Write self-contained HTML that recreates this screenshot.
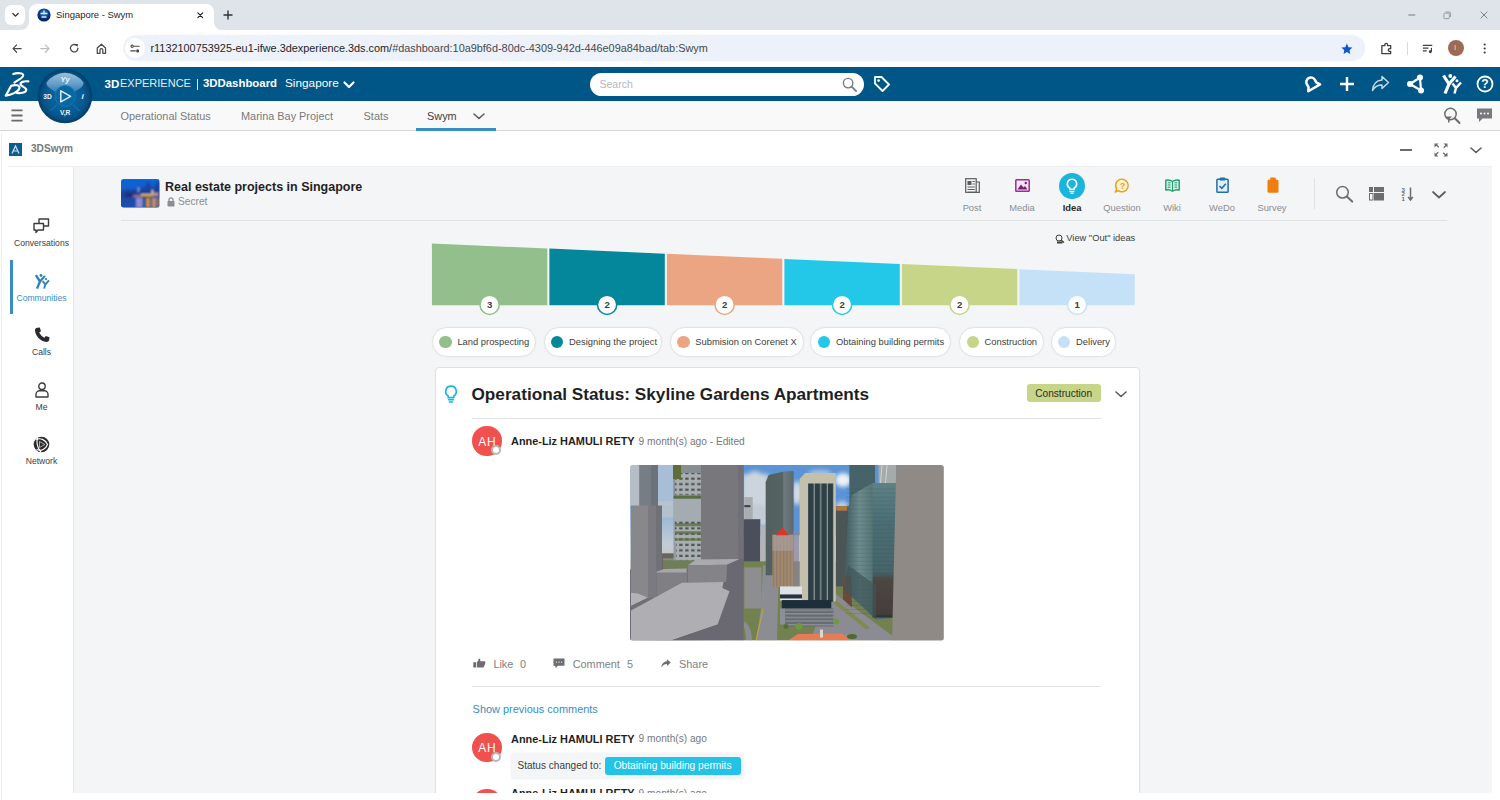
<!DOCTYPE html>
<html><head><meta charset="utf-8"><title>Singapore - Swym</title>
<style>
*{box-sizing:border-box;margin:0;padding:0}
html,body{width:1500px;height:800px;overflow:hidden;background:#fff;font-family:"Liberation Sans",Arial,sans-serif;color:#3d3d3d}
.a{position:absolute}
.t{position:absolute;white-space:nowrap;line-height:1}
svg{position:absolute;overflow:visible}
/* chrome */
#tabbar{left:0;top:0;width:1500px;height:30px;background:#dfe3ea}
#tab{left:29px;top:4px;width:185px;height:26px;background:#fff;border-radius:8px 8px 0 0}
#tabdd{left:5px;top:5px;width:20px;height:20px;background:#fff;border-radius:6px}
#addr{left:0;top:30px;width:1500px;height:37px;background:#fff}
#pill{left:122.500px;top:35px;width:1242px;height:26px;border-radius:13px;background:#edf1fa}
/* 3dx */
#top{left:0;top:66.700px;width:1500px;height:34.600px;background:#005686}
#tabs{left:0;top:101.300px;width:1500px;height:30.200px;background:#f9f9f9;border-bottom:1px solid #d8d8d8}
#whead{left:0;top:132px;width:1500px;height:35px;background:#fff}
#side{left:0;top:165px;width:73px;height:635px;background:#fff}
#main{left:74px;top:167px;width:1417.500px;height:625.500px;background:#f4f5f6}
.sl{left:3px;width:77px;text-align:center;font-size:8.6px;color:#3d3d3d}
.tl{top:203.600px;width:50px;text-align:center;font-size:9.375px;color:#8b8d90}
.pill{top:327px;height:29.700px;border-radius:15px;background:#fff;border:1px solid #e2e4e3;box-shadow:0 0 2px rgba(0,0,0,0.06)}
.pill i{position:absolute;left:6.500px;top:8px;width:12.400px;height:12.400px;border-radius:50%}
.pill span{position:absolute;left:24.500px;top:9.700px;font-size:9.375px;line-height:1;color:#3d3d3d;white-space:nowrap}
.av{width:29.400px;height:29.400px;border-radius:50%;background:#f0514f}
.avt{width:29.400px;text-align:center;font-size:12px;color:#fff;letter-spacing:0.600px;padding-left:0.500px}
.st{width:10px;height:10px;border-radius:50%;background:#fff;border:2px solid #b4b8ba}
.ac{top:658.500px;font-size:10.900px;color:#808285}
</style></head><body>
<div class="a" id="tabbar"></div>
<div class="a" id="tabdd"></div>
<div class="a" id="tab"></div>
<div class="a" id="addr"></div>
<div class="a" id="pill"></div>
<div class="a" id="top"></div>
<div class="a" id="tabs"></div>
<div class="a" id="whead"></div>
<div class="a" id="side"></div>
<div class="a" id="main"></div>

<!-- chrome tab strip -->
<svg style="left:11px;top:12px" width="9" height="6" viewBox="0 0 12 8"><path d="M2.5 2 L6 5.5 L9.5 2" fill="none" stroke="#333" stroke-width="1.8" stroke-linecap="round" stroke-linejoin="round"/></svg>
<svg style="left:21px;top:22px" width="8" height="8" viewBox="0 0 8 8"><path d="M0 8 A8 8 0 0 0 8 0 V8Z" fill="#fff"/></svg>
<svg style="left:214px;top:22px" width="8" height="8" viewBox="0 0 8 8"><path d="M8 8 A8 8 0 0 1 0 0 V8Z" fill="#fff"/></svg>
<svg style="left:37px;top:8px" width="14" height="14" viewBox="0 0 14 14"><defs><radialGradient id="fv" cx="50%" cy="35%" r="65%"><stop offset="0" stop-color="#3f93d6"/><stop offset="0.5" stop-color="#0b3f8c"/><stop offset="1" stop-color="#041c52"/></radialGradient></defs><circle cx="7" cy="7" r="6.6" fill="url(#fv)"/><path d="M3.5 5.5h7M4.5 9h5M7 2.5v3" stroke="#dbeaf8" stroke-width="1.3" fill="none"/></svg>
<div class="t" style="left:56px;top:10.300px;font-size:9.450px;color:#1f1f1f">Singapore - Swym</div>
<svg style="left:196.800px;top:11.800px" width="6.500" height="6.500" viewBox="0 0 8 8"><path d="M1 1L7 7M7 1L1 7" stroke="#222" stroke-width="1.4" stroke-linecap="round"/></svg>
<svg style="left:223px;top:10px" width="10" height="10" viewBox="0 0 10 10"><path d="M5 0.5V9.5M0.5 5H9.5" stroke="#333" stroke-width="1.4"/></svg>
<!-- window controls -->
<svg style="left:1407.800px;top:14px" width="8" height="2" viewBox="0 0 10 2"><path d="M0.5 1H9" stroke="#6f747c" stroke-width="1.200"/></svg>
<svg style="left:1443px;top:10.500px" width="8.500" height="8.500" viewBox="0 0 10 10"><rect x="1" y="2.5" width="6.5" height="6.5" rx="1.5" fill="none" stroke="#8a8f98" stroke-width="1"/><path d="M3 1.2h4.3a1.6 1.6 0 0 1 1.6 1.6V7" fill="none" stroke="#8a8f98" stroke-width="1"/></svg>
<svg style="left:1480px;top:10.800px" width="8" height="8" viewBox="0 0 10 10"><path d="M0.8 0.8L9.2 9.2M9.2 0.8L0.8 9.2" stroke="#777c84" stroke-width="1.200"/></svg>
<!-- nav row -->
<svg style="left:12.300px;top:43.500px" width="10" height="9.200" viewBox="0 0 13 12"><path d="M12 6H1.5M6 1.2L1.3 6L6 10.8" fill="none" stroke="#474747" stroke-width="1.5" stroke-linecap="round" stroke-linejoin="round"/></svg>
<svg style="left:39.500px;top:43.500px" width="10" height="9.200" viewBox="0 0 13 12"><path d="M1 6H11.5M7 1.2L11.7 6L7 10.8" fill="none" stroke="#b9bcc1" stroke-width="1.5" stroke-linecap="round" stroke-linejoin="round"/></svg>
<svg style="left:68.500px;top:43px" width="10.500" height="10.500" viewBox="0 0 13 13"><path d="M11 6.5A4.6 4.6 0 1 1 9.3 2.9" fill="none" stroke="#474747" stroke-width="1.6" stroke-linecap="round"/><path d="M7.3 1.2h3.6v3.6z" fill="#474747"/></svg>
<svg style="left:96.300px;top:42.500px" width="10.800" height="11.600" viewBox="0 0 13 14"><path d="M1.5 6L6.5 1.5L11.5 6V12.5H8.2V8.5a1.7 1.7 0 0 0-3.4 0V12.5H1.5Z" fill="none" stroke="#474747" stroke-width="1.5" stroke-linejoin="round"/></svg>
<div class="a" style="left:125px;top:38px;width:20px;height:20px;border-radius:10px;background:#fff"></div>
<svg style="left:130.200px;top:43.800px" width="10" height="9.200" viewBox="0 0 13 12"><path d="M5.5 3H12M1 9H7" stroke="#474747" stroke-width="1.5" stroke-linecap="round"/><circle cx="2.8" cy="3" r="1.5" fill="none" stroke="#474747" stroke-width="1.4"/><circle cx="10" cy="9" r="2" fill="#474747"/></svg>
<div class="t" id="url" style="left:150.500px;top:42.800px;font-size:10.880px;color:#1f1f1f">r1132100753925-eu1-ifwe.3dexperience.3ds.com/<span style="color:#45494f">#dashboard:10a9bf6d-80dc-4309-942d-446e09a84bad/tab:Swym</span></div>
<svg style="left:1340.600px;top:43.200px" width="11.800" height="11.800" viewBox="0 0 14 14"><path d="M7 0.6L8.9 4.9L13.5 5.4L10.1 8.5L11 13.1L7 10.8L3 13.1L3.9 8.5L0.5 5.4L5.1 4.9Z" fill="#0b57d0"/></svg>
<svg style="left:1379.500px;top:41.800px" width="13" height="13" viewBox="0 0 14 14"><path d="M2 4h3.2V3a1.5 1.5 0 0 1 3 0V4H11.5V7.2h-1a1.5 1.5 0 0 0 0 3h1V12.5H2Z" fill="none" stroke="#3c4043" stroke-width="1.4" stroke-linejoin="round"/></svg>
<div class="a" style="left:1406.500px;top:41.500px;width:1px;height:13.500px;background:#cfd9f5"></div>
<svg style="left:1422px;top:43.500px" width="12" height="9.400" viewBox="0 0 14 11"><path d="M1 1.5H12M1 4.8H7.5M1 8H5.5" stroke="#3c4043" stroke-width="1.4"/><path d="M11 4.5V9" stroke="#3c4043" stroke-width="1.4"/><circle cx="9.7" cy="9" r="1.7" fill="#3c4043"/></svg>
<div class="a" style="left:1448px;top:40px;width:16px;height:16px;border-radius:8px;background:#9c6a55"></div>
<div class="t" style="left:1454px;top:44px;font-size:8px;color:#f3d9cc">I</div>
<svg style="left:1482.600px;top:42.800px" width="3.400" height="11" viewBox="0 0 4 13"><circle cx="2" cy="1.8" r="1.3" fill="#3c4043"/><circle cx="2" cy="6.5" r="1.3" fill="#3c4043"/><circle cx="2" cy="11.2" r="1.3" fill="#3c4043"/></svg>
<!--CHROME-->

<!-- 3DS logo -->
<svg style="left:4px;top:72px" width="27" height="25" viewBox="0 0 27 25"><g fill="none" stroke="#fff" stroke-linecap="round" stroke-linejoin="round"><path d="M9.200 2C13 0.600 19.800 0.800 19.200 3.600C18.600 6.200 13.500 8.200 10.400 10.600" stroke-width="2.100"/><path d="M1.800 23.600L7.200 13.800C11 12.400 16.400 13 15.400 16.400C14.400 19.800 7 23.200 1.800 23.600Z" stroke-width="2.200"/><path d="M24.400 9.400C20 8.800 16 10.200 16.600 12.400C17.200 14.800 23.200 15.400 22.200 18.400C21.400 20.800 16 21.400 12.800 20.800" stroke-width="2.200"/></g></svg>
<!-- compass -->
<svg style="left:35.800px;top:66.600px" width="58" height="58" viewBox="0 0 58 58"><defs><radialGradient id="cg" cx="50%" cy="50%" r="50%"><stop offset="0" stop-color="#0b68a2"/><stop offset="0.750" stop-color="#075b93"/><stop offset="1" stop-color="#044a7c"/></radialGradient><linearGradient id="cq" x1="0" y1="0" x2="0" y2="1"><stop offset="0" stop-color="#a5c8e2"/><stop offset="0.550" stop-color="#6fa5cd"/><stop offset="1" stop-color="#2f7db5"/></linearGradient></defs>
<circle cx="29" cy="29" r="27.300" fill="#03426e"/><circle cx="29" cy="29" r="25" fill="url(#cg)"/>
<path d="M10.500 15.500A22.500 22.500 0 0 1 47.500 15.500C48 19 44 22 37 25.500A9.500 9.500 0 0 0 21 25.500C14 22 10 19 10.500 15.500Z" fill="url(#cq)" opacity="0.920"/>
<circle cx="29.200" cy="29" r="10.400" fill="#0968a3" stroke="#1378b6" stroke-width="0.800"/>
<path d="M24.800 23.800L34.600 29.300L24.800 34.800Z" fill="none" stroke="#e3eef8" stroke-width="1.500" stroke-linejoin="round"/>
<path d="M21 37.500L14.500 44M37 37.500L43.500 44" stroke="#2a7eb4" stroke-width="0.900"/>
<text x="29" y="14.800" font-size="7.500" font-weight="700" font-style="italic" fill="#eef5fb" text-anchor="middle" font-family="Liberation Sans,sans-serif">Yy</text>
<text x="11.500" y="31.700" font-size="6.600" font-weight="700" fill="#eef5fb" text-anchor="middle" font-family="Liberation Sans,sans-serif">3D</text>
<text x="46.500" y="32" font-size="8" font-weight="700" font-style="italic" fill="#eef5fb" text-anchor="middle" font-family="Liberation Sans,sans-serif">i</text>
<text x="29.200" y="48" font-size="6.600" font-weight="700" fill="#eef5fb" text-anchor="middle" font-family="Liberation Sans,sans-serif">V,R</text>
</svg>
<div class="t" style="left:104.500px;top:77.800px;font-size:11.600px;color:#fff;font-weight:700">3D</div>
<div class="t" style="left:120px;top:78.300px;font-size:11px;color:#e3eef6">EXPERIENCE</div>
<div class="a" style="left:196.600px;top:78.500px;width:1px;height:11.500px;background:#dbe8f1"></div>
<div class="t" style="left:203px;top:77.950px;font-size:11.400px;color:#fff;font-weight:700">3DDashboard</div>
<div class="t" id="sg" style="left:285px;top:77.500px;font-size:11.8px;color:#fff">Singapore</div>
<svg style="left:343px;top:81px" width="12" height="8" viewBox="0 0 12 8"><path d="M1.5 1.5L6 6L10.5 1.5" fill="none" stroke="#fff" stroke-width="2.2" stroke-linecap="round" stroke-linejoin="round"/></svg>
<!-- search -->
<div class="a" style="left:590.200px;top:72.500px;width:273.500px;height:23.100px;border-radius:12px;background:#fff"></div>
<div class="t" style="left:599.500px;top:79px;font-size:10.500px;color:#b4b6ba">Search</div>
<svg style="left:842px;top:76.800px" width="15.500" height="15.500" viewBox="0 0 17 17"><circle cx="6.7" cy="6.7" r="5.2" fill="none" stroke="#77797c" stroke-width="1.5"/><path d="M10.6 10.6L15.5 15.5" stroke="#77797c" stroke-width="2" stroke-linecap="round"/></svg>
<svg style="left:873px;top:75px" width="18" height="18" viewBox="0 0 18 18"><path d="M2 2H8.5L16 9.5L9.5 16L2 8.5Z" fill="none" stroke="#fff" stroke-width="1.8" stroke-linejoin="round" transform="rotate(0 9 9)"/><circle cx="5.6" cy="5.6" r="1.3" fill="#fff"/></svg>
<!-- right icons -->
<svg style="left:1302.500px;top:74px" width="18" height="20" viewBox="0 0 18 20"><g transform="rotate(-30 9 10)"><path d="M9 3.200a4.600 4.600 0 0 1 4.600 4.600v3.200l2.200 3.400H2.200l2.200-3.400V7.800A4.600 4.600 0 0 1 9 3.200Z" fill="none" stroke="#fff" stroke-width="2.500" stroke-linejoin="round"/></g></svg>
<svg style="left:1339px;top:76px" width="16" height="16" viewBox="0 0 16 16"><path d="M8 1V15M1 8H15" stroke="#fff" stroke-width="2.4"/></svg>
<svg style="left:1371px;top:75px" width="19" height="17" viewBox="0 0 19 17"><path d="M11 1.5L17.5 7.5L11 13.5V10C6 10 3.5 12 1.5 15.5C2 10 5 5.500 11 5Z" fill="none" stroke="#c5d9e8" stroke-width="1.5" stroke-linejoin="round"/></svg>
<svg style="left:1406px;top:74px" width="19" height="20" viewBox="0 0 19 20"><path d="M4 10L14 3.500L15 16.500Z" fill="none" stroke="#fff" stroke-width="2.2" stroke-linejoin="round"/><circle cx="4" cy="10" r="3" fill="#fff"/><circle cx="14" cy="3.500" r="3" fill="#fff"/><circle cx="15" cy="16.500" r="3" fill="#fff"/></svg>
<svg style="left:1441px;top:74px" width="22" height="20" viewBox="0 0 22 20"><g fill="none" stroke="#fff" stroke-linecap="butt" stroke-linejoin="round"><path d="M2.500 1.500L8 10L4 19.500" stroke-width="3.200"/><path d="M14.500 2.500L8 10" stroke-width="3"/><path d="M11.500 9.500L15 14L13.500 19.500M20 8.500L15 14" stroke-width="2.500"/></g><circle cx="9.300" cy="2" r="1.900" fill="#fff"/><circle cx="16" cy="6.800" r="1.500" fill="#fff"/></svg>
<svg style="left:1475.500px;top:75px" width="18" height="18" viewBox="0 0 18 18"><circle cx="9" cy="9" r="7.500" fill="none" stroke="#fff" stroke-width="1.800"/><text x="9" y="13.200" font-size="12" font-weight="700" fill="#fff" text-anchor="middle" font-family="Liberation Sans,sans-serif">?</text></svg>


<svg style="left:10.800px;top:108px" width="12" height="15" viewBox="0 0 13 15"><path d="M0.500 2H12.500M0.500 7.500H12.500M0.500 13H12.500" stroke="#6b6b6b" stroke-width="2"/></svg>
<div class="t" id="tb1" style="left:120.6px;top:111px;font-size:10.9px;color:#77797c">Operational Status</div>
<div class="t" id="tb2" style="left:241px;top:111px;font-size:10.9px;color:#77797c">Marina Bay Project</div>
<div class="t" id="tb3" style="left:363.6px;top:111px;font-size:10.9px;color:#77797c">Stats</div>
<div class="t" id="tb4" style="left:427px;top:111px;font-size:10.9px;color:#3d3d3d">Swym</div>
<svg style="left:473px;top:113px" width="12" height="7" viewBox="0 0 12 7"><path d="M1 1L6 5.500L11 1" fill="none" stroke="#5b5d5e" stroke-width="1.600" stroke-linecap="round" stroke-linejoin="round"/></svg>
<div class="a" style="left:416px;top:128px;width:80px;height:3px;background:#368ec4"></div>
<svg style="left:1443px;top:107px" width="18" height="18" viewBox="0 0 18 18"><circle cx="7.500" cy="7" r="5.700" fill="none" stroke="#6b6b6b" stroke-width="1.500"/><path d="M11.800 11.300L16.500 16" stroke="#6b6b6b" stroke-width="2" stroke-linecap="round"/><path d="M2.500 9.500H9L6.500 12V15.500H5V12Z" fill="#6b6b6b"/></svg>
<svg style="left:1476px;top:108px" width="17" height="15" viewBox="0 0 17 15"><path d="M1 0.500H16V10.500H6.500L3 14V10.500H1Z" fill="#77797c"/><circle cx="5" cy="5.500" r="1" fill="#fff"/><circle cx="8.500" cy="5.500" r="1" fill="#fff"/><circle cx="12" cy="5.500" r="1" fill="#fff"/></svg>


<div class="a" style="left:9px;top:143px;width:13px;height:13px;background:#0b5c8f"></div>
<svg style="left:9px;top:143px" width="13" height="13" viewBox="0 0 13 13"><path d="M3 10.500L6.500 3L10 10.500M4.500 8H8.500" fill="none" stroke="#cfe3f1" stroke-width="1.200"/></svg>
<div class="t" style="left:31px;top:144px;font-size:10.1px;font-weight:700;color:#77797c">3DSwym</div>
<div class="a" style="left:1400px;top:149px;width:12px;height:2px;background:#6b6b6b"></div>
<svg style="left:1434px;top:143px" width="14" height="14" viewBox="0 0 14 14"><g fill="#6b6b6b"><path d="M0.500 0.500h4l-1.300 1.300 2 2-0.900 0.900-2-2L0.500 4.500Z"/><path d="M13.500 0.500v4l-1.300-1.300-2 2-0.900-0.900 2-2L9.500 0.500Z"/><path d="M0.500 13.500v-4l1.300 1.300 2-2 0.900 0.900-2 2L4.500 13.500Z"/><path d="M13.500 13.500h-4l1.300-1.300-2-2 0.900-0.900 2 2L13.500 9.500Z"/></g></svg>
<svg style="left:1470px;top:147px" width="12" height="7" viewBox="0 0 12 7"><path d="M1 1L6 5.500L11 1" fill="none" stroke="#5b5d5e" stroke-width="1.600" stroke-linecap="round" stroke-linejoin="round"/></svg>


<div class="a" style="left:73px;top:166px;width:1px;height:626.500px;background:#e6e8e9"></div>
<div class="a" style="left:0.500px;top:133px;width:1px;height:667px;background:#eceeef"></div>
<div class="a" style="left:8px;top:165.800px;width:1484px;height:1px;background:#eceeef"></div>
<!-- conversations -->
<svg style="left:33px;top:218px" width="17" height="16" viewBox="0 0 17 16"><g fill="#fff" stroke="#3d3d3d" stroke-width="1.400" stroke-linejoin="round"><path d="M6 1H15.500V8H6Z"/><path d="M1 5.500H10.500V12H5L3 14.500V12H1Z"/></g></svg>
<div class="t sl" style="top:239px">Conversations</div>
<!-- communities -->
<div class="a" style="left:9.500px;top:260px;width:3px;height:54px;background:#368ec4"></div>
<svg style="left:33.500px;top:274px" width="16.500" height="15" viewBox="0 0 22 20"><g fill="none" stroke="#2f83bd" stroke-linecap="butt" stroke-linejoin="round"><path d="M2.500 1.500L8 10L4 19.500" stroke-width="3.200"/><path d="M14.500 2.500L8 10" stroke-width="3"/><path d="M11.500 9.500L15 14L13.500 19.500M20 8.500L15 14" stroke-width="2.500"/></g><circle cx="9.300" cy="2" r="1.900" fill="#2f83bd"/><circle cx="16" cy="6.800" r="1.500" fill="#2f83bd"/></svg>
<div class="t sl" style="top:293.500px;color:#368ec4">Communities</div>
<!-- calls -->
<svg style="left:34px;top:327px" width="16" height="16" viewBox="0 0 16 16"><path d="M3.200 0.800L5.800 0.500L7 4.200L5.200 5.600C6.200 7.800 8.200 9.800 10.400 10.800L11.800 9L15.500 10.200L15.200 12.800C15 14.200 13.800 15.200 12.400 15C6.200 14.200 1.800 9.800 1 3.600C0.800 2.200 1.800 1 3.200 0.800Z" fill="#2b2b2b"/></svg>
<div class="t sl" style="top:348px">Calls</div>
<!-- me -->
<svg style="left:35px;top:382px" width="14" height="16" viewBox="0 0 14 16"><circle cx="7" cy="4.200" r="3.200" fill="none" stroke="#3d3d3d" stroke-width="1.400"/><path d="M1 15V12.500C1 10 3 8.800 4.500 8.800H9.500C11 8.800 13 10 13 12.500V15Z" fill="none" stroke="#3d3d3d" stroke-width="1.400" stroke-linejoin="round"/></svg>
<div class="t sl" style="top:402.500px">Me</div>
<!-- network -->
<svg style="left:33px;top:436px" width="17" height="17" viewBox="0 0 17 17"><circle cx="8.500" cy="8.500" r="7.800" fill="#2b2b2b"/><path d="M3 3.500C7 1.500 12.500 3.500 14.500 8.500C13 13 8 15.500 3.500 13.500" fill="none" stroke="#fff" stroke-width="1.100"/><path d="M5 1.500C3 5 4 12 8 16" fill="none" stroke="#fff" stroke-width="1.100"/><path d="M6.500 5.500L11.800 8.500L6.500 11.500Z" fill="#2b2b2b" stroke="#fff" stroke-width="0.600"/></svg>
<div class="t sl" style="top:457px">Network</div>


<!-- community thumbnail -->
<svg style="left:121.200px;top:179px" width="38.600" height="28.800" viewBox="0 0 39 29"><defs><linearGradient id="th" x1="0" y1="0" x2="0" y2="1"><stop offset="0" stop-color="#0a62d6"/><stop offset="0.350" stop-color="#1361cf"/><stop offset="0.600" stop-color="#1d49a6"/><stop offset="1" stop-color="#1a4fb0"/></linearGradient><filter id="tb" x="-10%" y="-10%" width="120%" height="120%"><feGaussianBlur stdDeviation="1.100"/></filter><clipPath id="thc"><rect width="39" height="29" rx="2.500"/></clipPath></defs><g clip-path="url(#thc)"><rect width="39" height="29" fill="url(#th)"/><g filter="url(#tb)"><path d="M0 13L3 11L5 12L7 9L9 12L12 10L14 11L16 10L17.500 5L19 10L21 11L23 6L24.500 11L26 4L29 3.500L30 9L32 7L33 10L36 3L39 3V19H0Z" fill="#1d3f94" opacity="0.900"/><path d="M5 14h9v4H5z" fill="#15296a" opacity="0.700"/><rect x="20" y="15" width="12" height="2.600" fill="#e2b763"/><rect x="12" y="16.500" width="8" height="1.600" fill="#c77a8a"/><rect x="32" y="14" width="6" height="3" fill="#c99a7a"/><rect x="22" y="17.800" width="8" height="1.500" fill="#1a2a3a"/><rect x="15" y="19" width="7" height="10" fill="#b9a2dc" opacity="0.750"/><rect x="25" y="19" width="4.500" height="10" fill="#e8933a" opacity="0.900"/><rect x="31" y="19" width="4.500" height="10" fill="#e89a55" opacity="0.850"/><rect x="36.500" y="19" width="2.500" height="10" fill="#d98a4a" opacity="0.700"/><rect x="31" y="11" width="1.500" height="4" fill="#f0e0c0"/><rect x="17" y="8" width="1.200" height="5" fill="#9ab4e8"/></g></g></svg>
<div class="t" style="left:165px;top:180.500px;font-size:12.500px;font-weight:700;color:#1f1f1f">Real estate projects in Singapore</div>
<svg style="left:166.500px;top:196.500px" width="8" height="10" viewBox="0 0 8 10"><rect x="0.500" y="4" width="7" height="5.500" rx="0.800" fill="#8b8d90"/><path d="M2 4.200V2.800a2 2 0 0 1 4 0V4.200" fill="none" stroke="#8b8d90" stroke-width="1.300"/></svg>
<div class="t" style="left:178px;top:197px;font-size:10.200px;color:#8b8d90">Secret</div>
<div class="a" style="left:121px;top:220px;width:1326px;height:1px;background:#dfe2e3"></div>
<!-- toolbar -->
<svg style="left:965px;top:178px" width="15" height="15" viewBox="0 0 15 15"><rect x="0.700" y="0.700" width="10.500" height="13.600" fill="#f4f5f6" stroke="#5b5d5e" stroke-width="1.200"/><path d="M11.200 4H14.300V14.300H3" fill="none" stroke="#5b5d5e" stroke-width="1.200"/><rect x="2.500" y="3" width="4" height="4" fill="#5b5d5e"/><path d="M7.500 3.500H9.800M7.500 6H9.800M2.500 9H9.800M2.500 11.500H9.800" stroke="#5b5d5e" stroke-width="1"/></svg>
<div class="t tl" style="left:947px">Post</div>
<svg style="left:1015px;top:179px" width="15" height="13" viewBox="0 0 15 13"><rect x="0.800" y="0.800" width="13.400" height="11.400" rx="0.800" fill="#f3e4f3" stroke="#9c2a96" stroke-width="1.500"/><path d="M2.500 10.500L6 5.500L8.500 8.500L10 7L12.500 10.500Z" fill="#7a1f75"/><circle cx="10.800" cy="4" r="1.200" fill="#7a1f75"/></svg>
<div class="t tl" style="left:997px">Media</div>
<div class="a" style="left:1058.800px;top:172.800px;width:26.400px;height:26.400px;border-radius:50%;background:#1ab4dc"></div>
<svg style="left:1066px;top:178px" width="12" height="16" viewBox="0 0 12 16"><path d="M6 1.200A4.600 4.600 0 0 1 8.300 9.800V11.200H3.700V9.800A4.600 4.600 0 0 1 6 1.200Z" fill="none" stroke="#fff" stroke-width="1.600" stroke-linejoin="round"/><path d="M4 13.400H8M4.800 15.200H7.200" stroke="#fff" stroke-width="1.300" stroke-linecap="round"/></svg>
<div class="t tl" style="left:1047px;font-weight:700;color:#2b2b2b">Idea</div>
<svg style="left:1114px;top:178px" width="16" height="16" viewBox="0 0 16 16"><path d="M8.500 1.200A6.300 6.300 0 1 1 4.200 12.600L1.200 14.200L2.600 10.800A6.300 6.300 0 0 1 8.500 1.200Z" fill="#fdf3d3" stroke="#e8a317" stroke-width="1.400" stroke-linejoin="round"/><text x="8.600" y="11" font-size="9" font-weight="700" fill="#e8a317" text-anchor="middle" font-family="Liberation Sans,sans-serif">?</text></svg>
<div class="t tl" style="left:1097px">Question</div>
<svg style="left:1165px;top:179px" width="15" height="13" viewBox="0 0 15 13"><path d="M7.500 2.500C5.500 1 3 0.800 0.800 1.200V11C3 10.600 5.500 10.800 7.500 12.200C9.500 10.800 12 10.600 14.200 11V1.200C12 0.800 9.500 1 7.500 2.500Z" fill="#d9f0e6" stroke="#1f9d6e" stroke-width="1.400" stroke-linejoin="round"/><path d="M7.500 2.500V12M2.800 3.800H5.500M2.800 6H5.500M2.800 8.200H5.500M9.500 3.800H12.200M9.500 6H12.200M9.500 8.200H12.200" stroke="#1f9d6e" stroke-width="1"/></svg>
<div class="t tl" style="left:1147px">Wiki</div>
<svg style="left:1216px;top:177px" width="13" height="16" viewBox="0 0 13 16"><rect x="0.900" y="2.200" width="11.200" height="13" rx="0.800" fill="#e3eef7" stroke="#1f6fa8" stroke-width="1.500"/><rect x="3.800" y="0.600" width="5.400" height="3" rx="0.600" fill="#1f6fa8"/><path d="M3.500 9L5.800 11.300L9.800 6.800" fill="none" stroke="#1f6fa8" stroke-width="1.500"/></svg>
<div class="t tl" style="left:1197px">WeDo</div>
<svg style="left:1266.500px;top:177px" width="12" height="16" viewBox="0 0 12 16"><rect x="0.500" y="2.800" width="11" height="13" rx="1.200" fill="#ee7f0f"/><rect x="3.200" y="0.500" width="5.600" height="3.600" rx="0.900" fill="#ee7f0f"/></svg>
<div class="t tl" style="left:1247px">Survey</div>
<div class="a" style="left:1313.500px;top:178px;width:1px;height:31px;background:#dfe2e3"></div>
<svg style="left:1335px;top:185px" width="19" height="18" viewBox="0 0 19 18"><circle cx="7.500" cy="7.300" r="5.800" fill="none" stroke="#6b6d6f" stroke-width="1.500"/><path d="M11.800 11.600L17.200 16.600" stroke="#6b6d6f" stroke-width="2" stroke-linecap="round"/></svg>
<svg style="left:1368.500px;top:187px" width="15" height="13.500" viewBox="0 0 15 13.500"><rect x="0" y="0" width="4" height="5" fill="#6b6d6f"/><rect x="5" y="0" width="10" height="5" fill="#6b6d6f"/><rect x="5" y="6" width="10" height="7.500" fill="#6b6d6f"/><rect x="0.500" y="6.500" width="3.500" height="6.500" fill="none" stroke="#6b6d6f" stroke-width="1"/></svg>
<svg style="left:1400px;top:187px" width="15" height="14" viewBox="0 0 15 14"><path d="M10.500 0.500V12.500M8.200 10L10.500 13L12.800 10" fill="none" stroke="#6b6d6f" stroke-width="1.500"/><text x="3.200" y="4.500" font-size="6.200" font-weight="700" fill="#6b6d6f" text-anchor="middle" font-family="Liberation Sans,sans-serif">3</text><text x="3.200" y="9" font-size="6.200" font-weight="700" fill="#6b6d6f" text-anchor="middle" font-family="Liberation Sans,sans-serif">2</text><text x="3.200" y="13.500" font-size="6.200" font-weight="700" fill="#6b6d6f" text-anchor="middle" font-family="Liberation Sans,sans-serif">1</text></svg>
<svg style="left:1431.500px;top:190.500px" width="14" height="8" viewBox="0 0 14 8"><path d="M1 1L7 6.500L13 1" fill="none" stroke="#5b5d5e" stroke-width="1.700" stroke-linecap="round" stroke-linejoin="round"/></svg>

<svg id="funnel" style="left:0;top:0" width="1500" height="800" viewBox="0 0 1500 800">
<path d="M431.9 243.5L547.3 248.5L547.3 305.3L431.9 305.3Z" fill="#92bf8b"/>
<path d="M549.4 248.6L664.8 253.7L664.8 305.3L549.4 305.3Z" fill="#04869b"/>
<path d="M666.9 253.8L782.3 258.8L782.3 305.3L666.9 305.3Z" fill="#eca583"/>
<path d="M784.4 258.9L899.8 263.9L899.8 305.3L784.4 305.3Z" fill="#23c8e9"/>
<path d="M901.9 264.0L1017.3 269.1L1017.3 305.3L901.9 305.3Z" fill="#c6d587"/>
<path d="M1019.4 269.2L1134.8 274.2L1134.8 305.3L1019.4 305.3Z" fill="#c5e1f7"/>
<circle cx="489.6" cy="304.8" r="9.600" fill="#fff" stroke="#92bf8b" stroke-width="1.500"/>
<text x="489.6" y="308.200" font-size="9.600" font-weight="700" fill="#3d3d3d" text-anchor="middle" font-family="Liberation Sans,sans-serif">3</text>
<circle cx="607.1" cy="304.8" r="9.600" fill="#fff" stroke="#04869b" stroke-width="1.500"/>
<text x="607.1" y="308.200" font-size="9.600" font-weight="700" fill="#3d3d3d" text-anchor="middle" font-family="Liberation Sans,sans-serif">2</text>
<circle cx="724.6" cy="304.8" r="9.600" fill="#fff" stroke="#eca583" stroke-width="1.500"/>
<text x="724.6" y="308.200" font-size="9.600" font-weight="700" fill="#3d3d3d" text-anchor="middle" font-family="Liberation Sans,sans-serif">2</text>
<circle cx="842.1" cy="304.8" r="9.600" fill="#fff" stroke="#23c8e9" stroke-width="1.500"/>
<text x="842.1" y="308.200" font-size="9.600" font-weight="700" fill="#3d3d3d" text-anchor="middle" font-family="Liberation Sans,sans-serif">2</text>
<circle cx="959.6" cy="304.8" r="9.600" fill="#fff" stroke="#c6d587" stroke-width="1.500"/>
<text x="959.6" y="308.200" font-size="9.600" font-weight="700" fill="#3d3d3d" text-anchor="middle" font-family="Liberation Sans,sans-serif">2</text>
<circle cx="1077.1" cy="304.8" r="9.600" fill="#fff" stroke="#c5e1f7" stroke-width="1.500"/>
<text x="1077.1" y="308.200" font-size="9.600" font-weight="700" fill="#3d3d3d" text-anchor="middle" font-family="Liberation Sans,sans-serif">1</text>
</svg>
<div class="a pill" style="left:431.9px;width:103.9px"><i style="background:#92bf8b"></i><span>Land prospecting</span></div>
<div class="a pill" style="left:543.6px;width:118.9px"><i style="background:#04869b"></i><span>Designing the project</span></div>
<div class="a pill" style="left:669.8px;width:134.2px"><i style="background:#eca583"></i><span>Submision on Corenet X</span></div>
<div class="a pill" style="left:810.4px;width:140.6px"><i style="background:#23c8e9"></i><span>Obtaining building permits</span></div>
<div class="a pill" style="left:959.0px;width:84.5px"><i style="background:#c6d587"></i><span>Construction</span></div>
<div class="a pill" style="left:1050.6px;width:65.6px"><i style="background:#c5e1f7"></i><span>Delivery</span></div>
<svg style="left:1054.500px;top:233.600px" width="10" height="10" viewBox="0 0 10 10"><circle cx="4" cy="4" r="3" fill="none" stroke="#3d3d3d" stroke-width="1"/><path d="M6.200 6.200L9 8.500" stroke="#3d3d3d" stroke-width="1.300"/><path d="M2 7.500H7.500V9.500H2Z" fill="#3d3d3d"/></svg>
<div class="t" style="left:1066.300px;top:233.800px;font-size:9.300px;color:#3d3d3d">View "Out" ideas</div>


<div class="a" style="left:74px;top:167px;width:1417.500px;height:625.500px;overflow:hidden">
<div class="a" style="left:360.500px;top:200px;width:705px;height:500px;background:#fff;border:1px solid #dfe2e4;border-radius:4px;box-shadow:0 1px 2px rgba(0,0,0,0.05)"></div>
</div>
<!-- bulb -->
<svg style="left:443.800px;top:385px" width="14" height="18" viewBox="0 0 14 18"><path d="M7 1.200A5.300 5.300 0 0 1 9.800 11V12.600H4.200V11A5.300 5.300 0 0 1 7 1.200Z" fill="none" stroke="#19b5dc" stroke-width="1.700" stroke-linejoin="round"/><path d="M4.600 14.800H9.400M5.400 16.900H8.600" stroke="#19b5dc" stroke-width="1.500" stroke-linecap="round"/></svg>
<div class="t" style="left:471.500px;top:386.300px;font-size:17.200px;font-weight:700;color:#1f1f1f">Operational Status: Skyline Gardens Apartments</div>
<div class="a" style="left:1027px;top:384.400px;width:73.800px;height:18px;border-radius:3px;background:#c6d587"></div>
<div class="t" style="left:1035.200px;top:388.500px;font-size:10.150px;color:#2b2b2b">Construction</div>
<svg style="left:1114.500px;top:391px" width="12" height="7" viewBox="0 0 12 7"><path d="M1 1L6 5.500L11 1" fill="none" stroke="#5b5d5e" stroke-width="1.600" stroke-linecap="round" stroke-linejoin="round"/></svg>
<div class="a" style="left:472px;top:417.500px;width:629px;height:1px;background:#dfe2e3"></div>
<!-- author -->
<div class="a av" style="left:472.300px;top:426.300px"></div><div class="t avt" style="left:472.300px;top:435.500px">AH</div>
<div class="a st" style="left:491px;top:445px"></div>
<div class="t" style="left:511px;top:436.200px;font-size:10.920px;font-weight:700;color:#1f1f1f">Anne-Liz HAMULI RETY</div>
<div class="t" style="left:638.600px;top:436.800px;font-size:10.160px;color:#77797c">9 month(s) ago - Edited</div>

<svg style="left:629.700px;top:465.200px" width="313.800" height="175.600" viewBox="0 0 313.800 175" preserveAspectRatio="none">
<defs>
<filter id="bl" x="-20%" y="-20%" width="140%" height="140%"><feGaussianBlur stdDeviation="2.200"/></filter><filter id="b2"><feGaussianBlur stdDeviation="0.450"/></filter><clipPath id="ic"><rect width="313.800" height="175" rx="2.500"/></clipPath>
<linearGradient id="sky" x1="0" y1="0" x2="0" y2="1"><stop offset="0" stop-color="#5d95d6"/><stop offset="0.250" stop-color="#8fb3d8"/><stop offset="0.450" stop-color="#c2ccd4"/><stop offset="0.650" stop-color="#c9c0b2"/><stop offset="0.800" stop-color="#e6ecf2"/><stop offset="1" stop-color="#dfe6ee"/></linearGradient>
<linearGradient id="gl1" x1="0" y1="0" x2="1" y2="0"><stop offset="0" stop-color="#42595c"/><stop offset="0.300" stop-color="#6c8b8e"/><stop offset="0.600" stop-color="#52706f"/><stop offset="1" stop-color="#4a686b"/></linearGradient>
<linearGradient id="gl2" x1="0" y1="0" x2="0" y2="1"><stop offset="0" stop-color="#5e8186"/><stop offset="0.300" stop-color="#4b6e74"/><stop offset="0.660" stop-color="#45656a"/><stop offset="0.720" stop-color="#4d4643"/><stop offset="0.970" stop-color="#453e3b"/><stop offset="1" stop-color="#24343a"/></linearGradient>
<linearGradient id="dk" x1="0" y1="0" x2="1" y2="0"><stop offset="0" stop-color="#525f5f"/><stop offset="0.600" stop-color="#566463"/><stop offset="0.650" stop-color="#6e7b7e"/><stop offset="1" stop-color="#5c686c"/></linearGradient>
<pattern id="win" width="6" height="5.500" patternUnits="userSpaceOnUse"><rect width="6" height="5.500" fill="#a9afb0"/><rect x="1.200" y="1.500" width="3.400" height="2.200" fill="#4f5759"/></pattern>
<pattern id="gstr" width="6.600" height="10" patternUnits="userSpaceOnUse"><rect width="6.600" height="10" fill="#2f4045"/><rect x="5.400" width="1.200" height="10" fill="#8d9a9a"/></pattern>
<pattern id="hstr" width="10" height="3.600" patternUnits="userSpaceOnUse"><rect width="10" height="3.600" fill="#666b72"/><rect width="10" height="1.400" fill="#8a8f96"/></pattern>
<pattern id="tstr" width="3.400" height="10" patternUnits="userSpaceOnUse"><rect width="3.400" height="10" fill="#a58a6b"/><rect width="1.300" height="10" fill="#8a7a72"/></pattern>
</defs>
<g clip-path="url(#ic)"><g filter="url(#b2)">
<rect x="-2" y="-2" width="318" height="180" fill="url(#sky)"/>
<!-- sky center & right: blue with clouds -->
<rect x="113" y="0" width="155" height="70" fill="#5a93d6"/>
<g filter="url(#bl)"><rect x="112" y="9" width="27" height="52" fill="#c8d0d8"/><ellipse cx="125" cy="26" rx="13" ry="20" fill="#ccd5dd"/><ellipse cx="127" cy="48" rx="11" ry="9" fill="#c0cbd6"/><ellipse cx="213" cy="15" rx="8" ry="7" fill="#eef2f6"/><ellipse cx="167" cy="28" rx="5" ry="12" fill="#d5dde6"/><ellipse cx="212" cy="42" rx="7" ry="6" fill="#bcd0e6"/><ellipse cx="190" cy="8" rx="12" ry="3" fill="#a9c4e4"/></g>
<!-- far-left sky bits -->
<rect x="0" y="0" width="10" height="41" fill="#b5bec7"/>
<rect x="27" y="0" width="17" height="40" fill="#a7bed6"/><rect x="27" y="36" width="17" height="16" fill="#bcc4cb" opacity="0.800"/>
<rect x="29" y="88" width="15" height="20" fill="#6d625e"/><rect x="33" y="93" width="11" height="8" fill="#7d8f7c"/>
<!-- far left tower -->
<rect x="9.200" y="0" width="18.800" height="60" fill="#767d84"/><rect x="21" y="0" width="7" height="60" fill="#6c727c"/>
<!-- green building -->
<rect x="43.500" y="0" width="28.500" height="100" fill="#949c9f"/><rect x="43.500" y="0" width="28.500" height="30" fill="#878f92"/>
<rect x="45" y="8" width="26" height="22" fill="url(#win)"/><rect x="43" y="0" width="8" height="14" fill="#5f6d38"/>
<rect x="43.500" y="30.500" width="28" height="3" fill="#586e3f"/>
<rect x="44" y="34" width="27" height="22" fill="#a4acb2"/>
<rect x="45" y="56" width="27" height="22" fill="url(#win)"/><rect x="45" y="58" width="26" height="3" fill="#5c7040" opacity="0.800"/><rect x="45" y="66" width="26" height="3" fill="#5c7040" opacity="0.800"/><rect x="45" y="73" width="26" height="2.500" fill="#5c7040" opacity="0.700"/>
<rect x="46" y="78" width="26" height="20" fill="url(#win)"/>
<rect x="33" y="95" width="40" height="12" fill="#6f7d58"/>
<!-- big gray block centre-left -->
<rect x="71" y="0" width="42.700" height="175" fill="#78777c"/>
<rect x="108" y="0" width="5.700" height="175" fill="#716f78"/>
<rect x="0" y="104" width="73" height="72" fill="#716f78"/>
<!-- left gray tall block -->
<rect x="1" y="40.400" width="17" height="92" fill="#88878c"/><rect x="18" y="40.400" width="8" height="92" fill="#7b7a81"/><rect x="26" y="40.400" width="6" height="64" fill="#706f77"/>
<!-- mid block 1 -->
<path d="M26.500 106.500L34 103.700L56.700 103.100V107.300L26.500 107.300Z" fill="#a7a7ab"/>
<path d="M26.500 107.300H57V125L26.500 130Z" fill="#807f84"/>
<!-- mid block 2 -->
<path d="M58 100L66 94.200L110 93.600L97 99.500Z" fill="#aaaaae"/>
<path d="M58 100L97 99.500L96.500 116.500L58 117Z" fill="#848388"/>
<path d="M97 99.500L110 93.600H113.700V175H40L85 150L92 116.500H96.500Z" fill="#6a6971"/>
<!-- small left block -->
<path d="M1 127.400L8 128L18 132.200L1 140.500Z" fill="#b2b2b7"/><path d="M1 140.500L18 132.200V135L1 144Z" fill="#6f6e76"/>
<!-- foreground block -->
<path d="M1 145L52 117.300L93.500 116.700L92.300 122.700L99.500 125.700L87.600 158.900L42.500 174.300L1 175Z" fill="#afafb3"/>
<path d="M87.600 158.900L42.500 174.300V175H95Z" fill="#6a6971"/>
<!-- right of blocks: small light bldg, dark bldg -->
<rect x="114.300" y="32" width="8.400" height="22" fill="#a9adb1"/><rect x="114.300" y="40" width="6" height="2" fill="#3a3f45"/>
<rect x="113.700" y="54" width="16.600" height="50" fill="#4b505b"/>
<rect x="130.300" y="61" width="6" height="45" fill="#b4b4b8"/>
<!-- ground -->
<rect x="113.700" y="96" width="152" height="79" fill="#73804f"/>
<path d="M133 100L149 100L147 175L126 175L131 143Z" fill="#8b8d92"/><path d="M114 156C119 158 122 166 122 175H116C116 168 115 164 114 162Z" fill="#8b8d92"/>
<path d="M205 128L262 170V175L180 175L190 150Z" fill="#8b8c93"/>
<path d="M204 133L240 162L236 164L204 138Z" fill="#7f8a52"/>
<rect x="114.300" y="102" width="17.200" height="41" fill="#8e8e91"/>
<path d="M133 143C131 155 128 165 126 175" fill="none" stroke="#c2a83a" stroke-width="1"/>
<!-- dark tower -->
<path d="M135.700 17L138.700 10L154 6.500L163.600 6V110H135.700Z" fill="url(#dk)"/>
<!-- round tower -->
<rect x="142.500" y="69.500" width="20.500" height="52" fill="url(#tstr)"/><rect x="142.500" y="69.500" width="20.500" height="16" fill="#a99c99" opacity="0.700"/>
<path d="M145.800 70L152.300 62L158.800 70Z" fill="#da352b"/>
<rect x="163" y="66" width="6" height="55" fill="#8b86a0" opacity="0.700"/>
<!-- dark bldg behind cream -->
<rect x="205.800" y="41" width="13" height="80" fill="#4c5456"/><rect x="206.300" y="41" width="11" height="4.500" fill="#b27a3c"/>
<!-- cream building -->
<path d="M169.600 14L175 8H205.800V136H169.600Z" fill="#c3c0ae"/>
<rect x="178" y="18.400" width="25.400" height="118" fill="url(#gstr)"/>
<!-- right glass tower -->
<rect x="219.400" y="0" width="25.600" height="60" fill="#456467"/>
<rect x="248.500" y="0" width="17.500" height="24" fill="#a5abaa"/><path d="M252 0L250 24M257 0L255 24" stroke="#d0d4d3" stroke-width="1"/>
<path d="M222 30L242.600 18H266V152L246 154L214 124L218.300 42Z" fill="url(#gl1)"/>
<path d="M242.600 18H266V152H242.600Z" fill="url(#gl2)"/>
<path d="M213 112L221 110L222 142L213 134Z" fill="#6b4a40"/><g stroke="#2f4a4e" stroke-width="0.500" opacity="0.350"><path d="M216 24H266"/><path d="M216 28H266"/><path d="M216 32H266"/><path d="M216 36H266"/><path d="M216 40H266"/><path d="M216 44H266"/><path d="M216 48H266"/><path d="M216 52H266"/><path d="M216 56H266"/><path d="M216 60H266"/><path d="M216 64H266"/><path d="M216 68H266"/><path d="M216 72H266"/><path d="M216 76H266"/><path d="M216 80H266"/><path d="M216 84H266"/><path d="M216 88H266"/><path d="M216 92H266"/><path d="M216 96H266"/><path d="M216 100H266"/><path d="M216 104H266"/><path d="M216 108H266"/><path d="M216 112H266"/><path d="M216 116H266"/><path d="M216 120H266"/><path d="M216 124H266"/><path d="M216 128H266"/><path d="M216 132H266"/><path d="M216 136H266"/><path d="M216 140H266"/><path d="M216 144H266"/><path d="M216 148H266"/></g>
<path d="M214 124L246 154V120L218 100Z" fill="#3e5557" opacity="0.700"/>
<!-- low building -->
<rect x="150" y="121" width="22" height="14" fill="#dfe3e6"/><rect x="150" y="129" width="22" height="4" fill="#26343c"/>
<rect x="151.800" y="134.600" width="49.500" height="8.500" fill="#1f2f3a"/>
<rect x="154.700" y="142.900" width="48.700" height="18" fill="url(#hstr)"/>
<rect x="150" y="143" width="5" height="16" fill="#8b8f96"/>
<circle cx="169" cy="161" r="3.500" fill="#6c9a3e"/><circle cx="156" cy="161" r="2.500" fill="#55702f"/><circle cx="206" cy="156" r="3" fill="#6c9a3e"/>
<!-- orange roof -->
<path d="M158 175L168 168.500L212 168L222 175Z" fill="#e67c56"/><rect x="190" y="164" width="3" height="8" fill="#ddd8c8"/><ellipse cx="222" cy="171" rx="5" ry="2.500" fill="#4d6a32"/>
<!-- right slab -->
<path d="M266.300 -2H316V178H262Z" fill="#8f8a85"/>
</g></g>
</svg>

<!-- actions -->
<svg style="left:473px;top:658px" width="13" height="10" viewBox="0 0 13 10"><path d="M0.300 4.200H3V9.500H0.300Z" fill="#6b6d6f"/><path d="M3.800 4.300C5.200 3.300 5.600 1.900 5.600 0.500C6.900 0.300 7.600 1.300 7.300 3.300H11.300C12.300 3.300 12.700 4.100 12.300 4.900L11 8.700C10.800 9.300 10.400 9.500 9.800 9.500H3.800Z" fill="#6b6d6f"/></svg>
<div class="t ac" style="left:493.400px">Like</div><div class="t ac" style="left:520px">0</div>
<svg style="left:553px;top:658px" width="12" height="11" viewBox="0 0 12 11"><path d="M0.500 0.500H11.500V7.800H5L2.500 10.300V7.800H0.500Z" fill="#6b6d6f"/><circle cx="3.500" cy="4.100" r="0.700" fill="#fff"/><circle cx="6" cy="4.100" r="0.700" fill="#fff"/><circle cx="8.500" cy="4.100" r="0.700" fill="#fff"/></svg>
<div class="t ac" style="left:572.700px">Comment</div><div class="t ac" style="left:627px">5</div>
<svg style="left:660.500px;top:659px" width="10" height="9" viewBox="0 0 10 9"><path d="M6 0.300L9.800 3.600L6 6.900V4.900C3.500 4.900 1.800 5.900 0.300 8.500C0.600 5 2.800 2.500 6 2.300Z" fill="#6b6d6f"/></svg>
<div class="t ac" style="left:679px">Share</div>
<div class="a" style="left:472px;top:686px;width:629px;height:1px;background:#dfe2e3"></div>
<div class="t" style="left:472.600px;top:703.800px;font-size:10.950px;color:#368ec4">Show previous comments</div>
<!-- comment 1 -->
<div class="a av" style="left:472.300px;top:733px"></div><div class="t avt" style="left:472.300px;top:742.200px">AH</div>
<div class="a st" style="left:491px;top:751.700px"></div>
<div class="t" style="left:511px;top:733.500px;font-size:10.920px;font-weight:700;color:#1f1f1f">Anne-Liz HAMULI RETY</div>
<div class="t" style="left:638.600px;top:734px;font-size:10.160px;color:#77797c">9 month(s) ago</div>
<div class="a" style="left:511px;top:752.700px;width:232.700px;height:26.200px;border-radius:3px;background:#f4f5f6;box-shadow:0 0 2px rgba(0,0,0,0.08)"></div>
<div class="t" style="left:517.500px;top:761px;font-size:10.050px;color:#3d3d3d">Status changed to:</div>
<div class="a" style="left:605px;top:757.300px;width:135.500px;height:17.700px;border-radius:3px;background:#23c3e8"></div>
<div class="t" style="left:613.700px;top:761px;font-size:10.200px;color:#fff">Obtaining building permits</div>
<!-- comment 2 (clipped) -->
<div class="a" style="left:434px;top:786px;width:400px;height:6.500px;overflow:hidden">
<div class="a av" style="left:38.300px;top:2.700px"></div>
<div class="t" style="left:77px;top:2.200px;font-size:10.920px;font-weight:700;color:#1f1f1f">Anne-Liz HAMULI RETY</div>
<div class="t" style="left:204.600px;top:2.700px;font-size:10.160px;color:#77797c">9 month(s) ago</div>
</div>

</body></html>
